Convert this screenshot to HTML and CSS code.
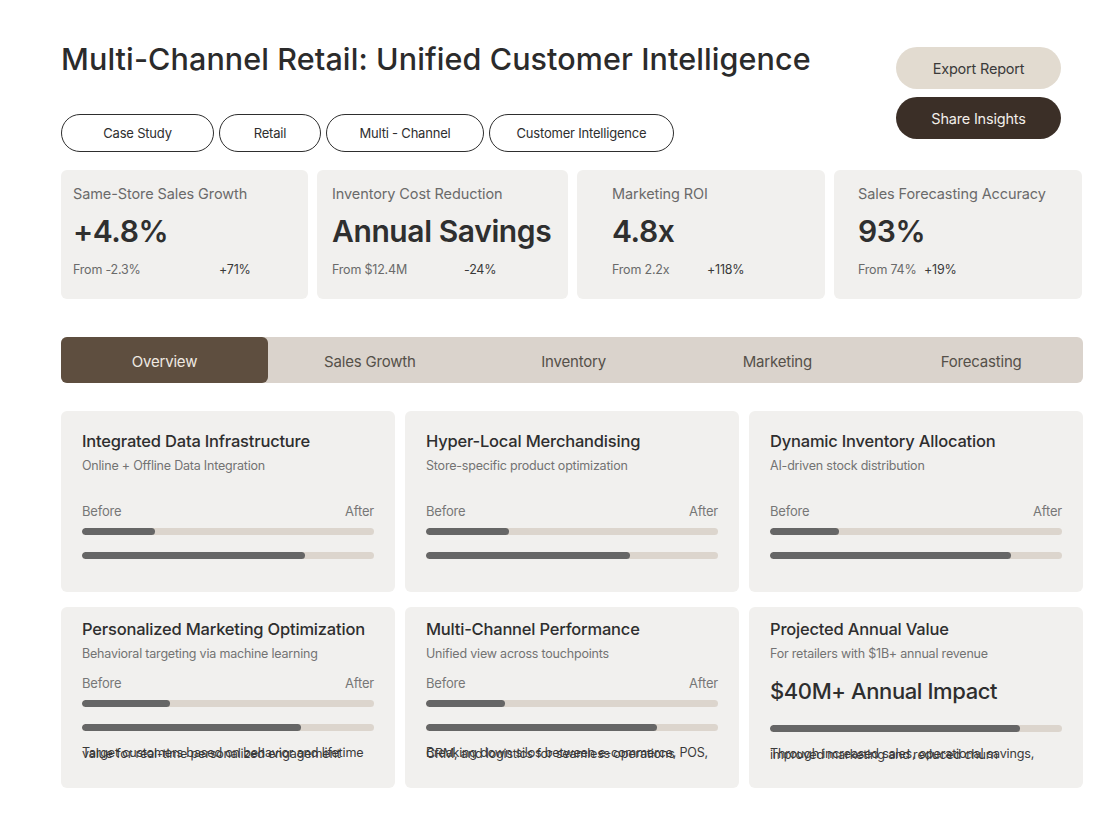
FILE: index.html
```html
<!DOCTYPE html>
<html lang="en">
<head>
<meta charset="utf-8">
<title>Multi-Channel Retail: Unified Customer Intelligence</title>
<link rel="stylesheet" href="styles.css">
</head>
<body>
<main class="page">
  <header class="header">
    <div class="header-main">
      <h1 class="title">Multi-Channel Retail: Unified Customer Intelligence</h1>
      <div class="tags">
        <span class="tag tag--a">Case Study</span>
        <span class="tag tag--b">Retail</span>
        <span class="tag tag--c">Multi - Channel</span>
        <span class="tag tag--d">Customer Intelligence</span>
      </div>
    </div>
    <div class="actions">
      <button class="btn btn--light">Export Report</button>
      <button class="btn btn--dark">Share Insights</button>
    </div>
  </header>

  <section class="metrics">
    <div class="metric metric--a">
      <div class="metric-label">Same-Store Sales Growth</div>
      <div class="metric-value">+4.8%</div>
      <div class="metric-foot"><span class="from">From -2.3%</span><span class="change">+71%</span></div>
    </div>
    <div class="metric metric--b">
      <div class="metric-label">Inventory Cost Reduction</div>
      <div class="metric-value">Annual Savings</div>
      <div class="metric-foot"><span class="from">From $12.4M</span><span class="change">-24%</span></div>
    </div>
    <div class="metric metric--c">
      <div class="metric-label">Marketing ROI</div>
      <div class="metric-value">4.8x</div>
      <div class="metric-foot"><span class="from">From 2.2x</span><span class="change">+118%</span></div>
    </div>
    <div class="metric metric--d">
      <div class="metric-label">Sales Forecasting Accuracy</div>
      <div class="metric-value">93%</div>
      <div class="metric-foot"><span class="from">From 74%</span><span class="change">+19%</span></div>
    </div>
  </section>

  <nav class="tabs">
    <div class="tab tab--active">Overview</div>
    <div class="tab">Sales Growth</div>
    <div class="tab">Inventory</div>
    <div class="tab">Marketing</div>
    <div class="tab">Forecasting</div>
  </nav>

  <section class="grid">
    <div class="card card--top">
      <h3 class="card-title">Integrated Data Infrastructure</h3>
      <p class="card-sub">Online + Offline Data Integration</p>
      <div class="ba"><span>Before</span><span>After</span></div>
      <div class="bar"><div class="fill" style="width:25%"></div></div>
      <div class="bar bar--second"><div class="fill" style="width:76.5%"></div></div>
    </div>
    <div class="card card--top">
      <h3 class="card-title">Hyper-Local Merchandising</h3>
      <p class="card-sub">Store-specific product optimization</p>
      <div class="ba"><span>Before</span><span>After</span></div>
      <div class="bar"><div class="fill" style="width:28.5%"></div></div>
      <div class="bar bar--second"><div class="fill" style="width:70%"></div></div>
    </div>
    <div class="card card--top">
      <h3 class="card-title">Dynamic Inventory Allocation</h3>
      <p class="card-sub">AI-driven stock distribution</p>
      <div class="ba"><span>Before</span><span>After</span></div>
      <div class="bar"><div class="fill" style="width:23.5%"></div></div>
      <div class="bar bar--second"><div class="fill" style="width:82.5%"></div></div>
    </div>

    <div class="card card--bottom">
      <h3 class="card-title">Personalized Marketing Optimization</h3>
      <p class="card-sub">Behavioral targeting via machine learning</p>
      <div class="ba"><span>Before</span><span>After</span></div>
      <div class="bar"><div class="fill" style="width:30%"></div></div>
      <div class="bar bar--second"><div class="fill" style="width:75%"></div></div>
      <p class="card-desc">Target customers based on behavior and lifetime value for real-time personalized engagement</p>
    </div>
    <div class="card card--bottom">
      <h3 class="card-title">Multi-Channel Performance</h3>
      <p class="card-sub">Unified view across touchpoints</p>
      <div class="ba"><span>Before</span><span>After</span></div>
      <div class="bar"><div class="fill" style="width:27%"></div></div>
      <div class="bar bar--second"><div class="fill" style="width:79%"></div></div>
      <p class="card-desc">Breaking down silos between e-commerce, POS, CRM, and logistics for seamless operations</p>
    </div>
    <div class="card card--bottom">
      <h3 class="card-title">Projected Annual Value</h3>
      <p class="card-sub">For retailers with $1B+ annual revenue</p>
      <div class="impact">$40M+ Annual Impact</div>
      <div class="bar bar--impact"><div class="fill" style="width:85.5%"></div></div>
      <p class="card-desc">Through increased sales, operational savings, improved marketing and reduced churn</p>
    </div>
  </section>
</main>
</body>
</html>
```

FILE: styles.css
```css
* { box-sizing: border-box; }

html, body {
  margin: 0;
  padding: 0;
  background: #ffffff;
}

body {
  font-family: "Inter", "Liberation Sans", sans-serif;
  color: #2e2e2e;
}

.page {
  padding: 40px 32px 40px 61px;
}

/* Header */
.header {
  display: flex;
  justify-content: space-between;
  align-items: flex-start;
}

.title {
  margin: 0;
  font-size: 30.5px;
  line-height: 38px;
  font-weight: 500;
  letter-spacing: 0.1px;
  color: #2b2b2b;
}

.tags {
  display: flex;
  gap: 5px;
  margin-top: 36px;
}

.tag {
  display: flex;
  align-items: center;
  justify-content: center;
  height: 38px;
  border: 1.5px solid #2e2e2e;
  border-radius: 19px;
  font-size: 13px;
  color: #2e2e2e;
  letter-spacing: -0.2px;
}
.tag--a { width: 153px; }
.tag--b { width: 102px; }
.tag--c { width: 158px; }
.tag--d { width: 185px; }

.actions {
  display: flex;
  flex-direction: column;
  gap: 8px;
  margin-top: 7px;
  margin-right: 22px;
}

.btn {
  width: 165px;
  height: 42px;
  border: none;
  border-radius: 21px;
  font-family: inherit;
  font-size: 14.5px;
  letter-spacing: -0.2px;
}
.btn--light { background: #e2dbd0; color: #3a3a3a; }
.btn--dark { background: #3b2f27; color: #f2eee9; }

/* Metrics */
.metrics {
  display: grid;
  grid-template-columns: 247px 251px 248px 248px;
  gap: 9px;
  margin-top: 18px;
}

.metric {
  height: 129px;
  background: #f1f0ee;
  border-radius: 6px;
  padding-top: 14px;
}
.metric--a { padding-left: 12px; }
.metric--b { padding-left: 15px; }
.metric--c { padding-left: 35px; }
.metric--d { padding-left: 24px; }

.metric-label {
  font-size: 14.5px;
  line-height: 20px;
  color: #6a6a6a;
  letter-spacing: -0.1px;
}

.metric-value {
  margin-top: 9px;
  font-size: 30px;
  line-height: 36px;
  font-weight: 600;
  letter-spacing: -0.4px;
  color: #2f2f2f;
}

.metric-foot {
  display: flex;
  margin-top: 13px;
  font-size: 12.5px;
  line-height: 16px;
  color: #6a6a6a;
  letter-spacing: -0.2px;
}
.metric-foot .change { color: #3a3a3a; }
.metric--a .from { width: 146px; }
.metric--b .from { width: 132px; }
.metric--c .from { width: 95px; }
.metric--d .from { width: 66px; }

/* Tabs */
.tabs {
  display: grid;
  grid-template-columns: 207px repeat(4, 203.75px);
  height: 46px;
  margin-top: 38px;
  background: #dad3cc;
  border-radius: 6px;
}

.tab {
  display: flex;
  align-items: center;
  justify-content: center;
  padding-top: 3px;
  font-size: 15px;
  color: #555049;
  letter-spacing: -0.2px;
}
.tab--active {
  background: #5e4e3f;
  color: #efe9e2;
  border-radius: 6px;
}

/* Cards */
.grid {
  display: grid;
  grid-template-columns: repeat(3, 1fr);
  column-gap: 10px;
  row-gap: 15px;
  margin-top: 28px;
}

.card {
  height: 181px;
  background: #f1f0ee;
  border-radius: 6px;
  padding: 18px 21px 0;
}
.card--bottom { padding-top: 10px; }

.card-title {
  margin: 0;
  font-size: 16.5px;
  line-height: 24px;
  font-weight: 500;
  letter-spacing: -0.2px;
  color: #2e2e2e;
}

.card-sub {
  margin: 3px 0 0;
  font-size: 12.5px;
  line-height: 20px;
  color: #737373;
  letter-spacing: -0.2px;
}

.ba {
  display: flex;
  justify-content: space-between;
  margin-top: 25px;
  font-size: 13px;
  line-height: 20px;
  color: #777;
  letter-spacing: -0.2px;
}
.card--bottom .ba { margin-top: 9px; }

.bar {
  height: 7px;
  margin-top: 6.5px;
  background: #dcd5cd;
  border-radius: 4px;
  overflow: hidden;
}
.bar--second { margin-top: 17px; }
.bar--impact { margin-top: 18.5px; }

.fill {
  height: 100%;
  background: #666666;
  border-radius: 4px;
}

.impact {
  margin-top: 12px;
  font-size: 22px;
  line-height: 30px;
  font-weight: 500;
  letter-spacing: -0.4px;
  color: #2e2e2e;
}

.card-desc {
  margin: 21px 0 0;
  font-size: 12.6px;
  line-height: 1px;
  color: #3a3a3a;
  letter-spacing: -0.2px;
}
```
